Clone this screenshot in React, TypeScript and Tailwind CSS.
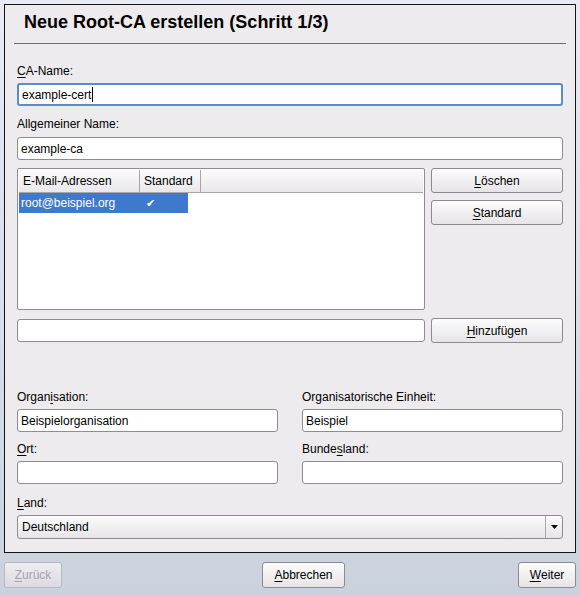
import React from "react";

const font = { fontFamily: '"Liberation Sans", Arial, sans-serif' };

function U({ children }: { children: React.ReactNode }) {
  return <span className="underline underline-offset-[2px]">{children}</span>;
}

function Field({ value, focus, caret }: { value?: string; focus?: boolean; caret?: boolean }) {
  return (
    <div
      className={
        "flex h-[23px] items-center rounded-[3px] bg-white px-[3px] text-[12px] text-black " +
        (focus ? "border-2 border-[#5b8bd0] px-[2px]" : "border border-[#8f8c90]")
      }
    >
      <span>{value}</span>
      {caret ? <span className="ml-[1px] inline-block h-[15px] w-[1px] bg-black" /> : null}
    </div>
  );
}

function Btn({ children, className = "", disabled }: { children: React.ReactNode; className?: string; disabled?: boolean }) {
  return (
    <div
      className={
        "flex items-center justify-center rounded-[3px] border text-[12px] " +
        (disabled
          ? "border-[#b9b6bd] bg-gradient-to-b from-[#eeedf2] to-[#dcdbe3] text-[#a4a2aa] "
          : "border-[#8d8a8f] bg-gradient-to-b from-[#fdfdfd] to-[#e6e4e7] text-black ") +
        className
      }
    >
      {children}
    </div>
  );
}

export default function App() {
  return (
    <div
      style={font}
      className="h-[596px] w-[580px] bg-gradient-to-b from-[#e9eaf4] to-[#cad2de] px-[4px] pt-[4px]"
    >
      <div className="flex h-[549px] flex-col border border-[#141414] bg-[#eeebee]">
        <div className="pl-[19px] pt-[7px] text-[18px] font-bold leading-[20px] text-black">
          Neue Root-CA erstellen (Schritt 1/3)
        </div>
        <div className="mx-[9px] mt-[11px] h-[1px] bg-[#6e6c70]" />

        <div className="flex flex-col px-[12px] text-[12px] text-black">
          <div className="mt-[19px] h-[16px] leading-[16px]">
            <U>C</U>A-Name:
          </div>
          <div className="mt-[4px]">
            <Field value="example-cert" focus caret />
          </div>

          <div className="mt-[10px] h-[16px] leading-[16px]">Allgemeiner Name:</div>
          <div className="mt-[5px]">
            <Field value="example-ca" />
          </div>

          <div className="mt-[8px] flex gap-[6px]">
            <div className="h-[142px] w-[408px] rounded-[2px] border border-[#8f8c90] bg-white p-[1px]">
              <div className="flex h-[23px] border-b border-[#a9a6aa] bg-gradient-to-b from-[#fbfbfb] to-[#e9e7ea]">
                <div className="flex w-[121px] items-center border-r border-[#a9a6aa] pl-[4px]">E-Mail-Adressen</div>
                <div className="flex w-[61px] items-center border-r border-[#a9a6aa] pl-[4px]">Standard</div>
                <div className="flex-1" />
              </div>
              <div className="flex h-[20px] w-[169px] items-center bg-[#3f79cc] text-white">
                <div className="w-[121px] pl-[2px]">root@beispiel.org</div>
                <div className="pl-[6px] text-[11px]">✔</div>
              </div>
            </div>
            <div className="flex w-[132px] flex-col gap-[7px]">
              <Btn className="h-[25px]">
                <U>L</U>öschen
              </Btn>
              <Btn className="h-[25px]">
                <U>S</U>tandard
              </Btn>
            </div>
          </div>

          <div className="mt-[8px] flex items-start gap-[6px]">
            <div className="mt-[1px] w-[408px]">
              <Field />
            </div>
            <Btn className="h-[25px] w-[132px]">
              <U>H</U>inzufügen
            </Btn>
          </div>

          <div className="mt-[46px] grid grid-cols-2 gap-x-[24px]">
            <div className="flex flex-col">
              <div className="h-[16px] leading-[16px]">
                Organ<U>i</U>sation:
              </div>
              <div className="mt-[4px]">
                <Field value="Beispielorganisation" />
              </div>
              <div className="mt-[9px] h-[16px] leading-[16px]">
                <U>O</U>rt:
              </div>
              <div className="mt-[4px]">
                <Field />
              </div>
            </div>
            <div className="flex flex-col">
              <div className="h-[16px] leading-[16px]">Organisatorische Einheit:</div>
              <div className="mt-[4px]">
                <Field value="Beispiel" />
              </div>
              <div className="mt-[9px] h-[16px] leading-[16px]">
                Bunde<U>s</U>land:
              </div>
              <div className="mt-[4px]">
                <Field />
              </div>
            </div>
          </div>

          <div className="mt-[11px] h-[16px] leading-[16px]">
            <U>L</U>and:
          </div>
          <div className="mt-[4px] flex h-[24px] rounded-[3px] border border-[#8f8c90] bg-gradient-to-b from-[#fbfbfb] to-[#e7e5e8]">
            <div className="flex flex-1 items-center pl-[4px]">Deutschland</div>
            <div className="flex w-[17px] items-center justify-center border-l border-[#a9a6aa]">
              <svg width="7" height="4" viewBox="0 0 7 4">
                <path d="M0 0h7L3.5 4z" fill="#000" />
              </svg>
            </div>
          </div>
        </div>
      </div>

      <div className="mt-[9px] flex items-start text-[12px]">
        <Btn disabled className="h-[26px] w-[58px]">
          <U>Z</U>urück
        </Btn>
        <Btn className="ml-[200px] h-[26px] w-[83px]">
          <U>A</U>bbrechen
        </Btn>
        <Btn className="ml-auto h-[26px] w-[58px]">
          <U>W</U>eiter
        </Btn>
      </div>
    </div>
  );
}
